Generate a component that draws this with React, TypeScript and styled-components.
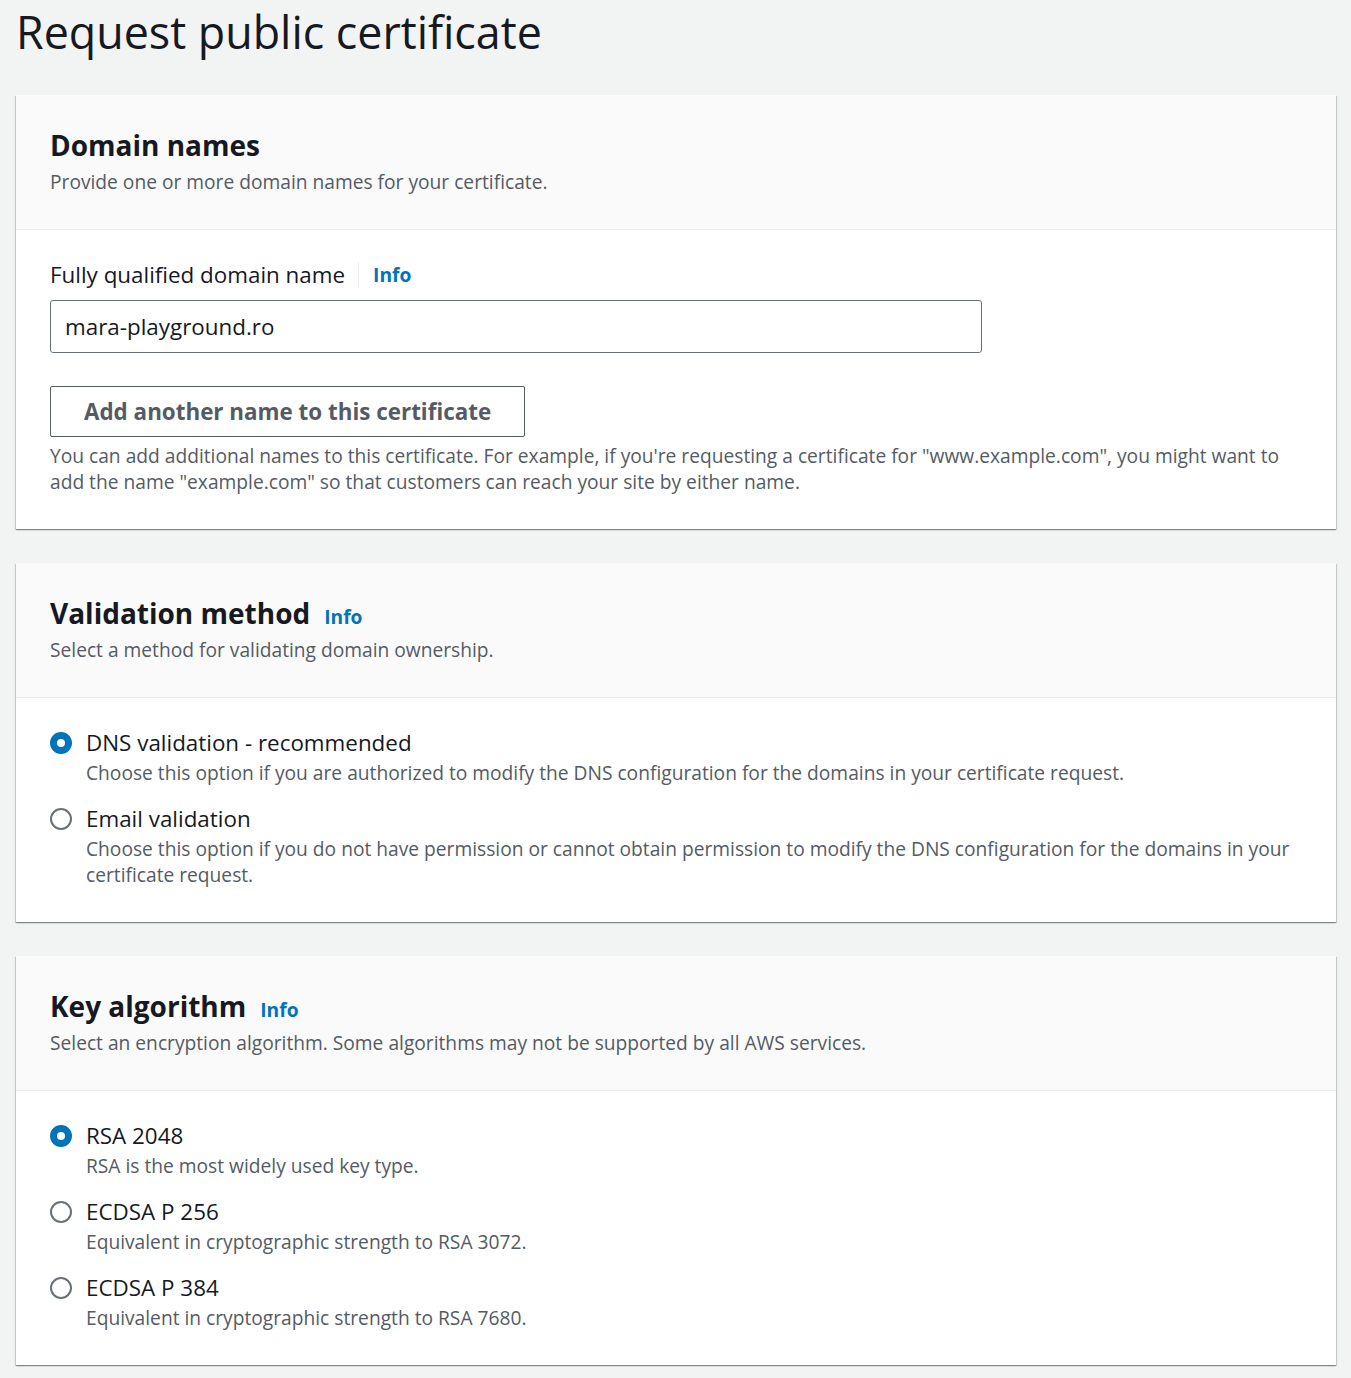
import React, { useState } from 'react';
import styled, { createGlobalStyle } from 'styled-components';

const GlobalStyle = createGlobalStyle`
  html, body {
    margin: 0;
    padding: 0;
    background: #f2f3f3;
  }
  body {
    font-family: 'Open Sans', 'Noto Sans', sans-serif;
    color: #16191f;
  }
  * {
    box-sizing: border-box;
  }
`;

const Page = styled.div`
  padding: 0 15px 12px 16px;
`;

const PageTitle = styled.h1`
  margin: 0;
  font-size: 44.8px;
  line-height: 64px;
  font-weight: 400;
  color: #16191f;
  padding-bottom: 31px;
`;

const Stack = styled.div`
  display: flex;
  flex-direction: column;
  gap: 34px;
`;

const Card = styled.section`
  background: #ffffff;
  box-shadow: 0 1px 1px 0 rgba(0, 28, 36, 0.3), 1px 1px 1px 0 rgba(0, 28, 36, 0.15),
    -1px 1px 1px 0 rgba(0, 28, 36, 0.15);
`;

const CardHeader = styled.header`
  background: #fafafa;
  border-bottom: 1px solid #eaeded;
  padding: 32px 34px 34px;
`;

const CardTitle = styled.h2`
  margin: 0;
  height: 36px;
  font-size: 28px;
  line-height: 36px;
  font-weight: 700;
  display: flex;
  align-items: baseline;
  gap: 14px;
`;

const Description = styled.p`
  margin: 6px 0 0;
  font-size: 19.2px;
  line-height: 26px;
  color: #545b64;
`;

const CardBody = styled.div`
  padding: 32px 34px 34px;
`;

const InfoLink = styled.a`
  font-size: 19.2px;
  line-height: 26px;
  font-weight: 700;
  color: #0073bb;
  text-decoration: none;
  cursor: pointer;
`;

const FieldLabelRow = styled.div`
  display: flex;
  align-items: center;
  height: 26px;
`;

const FieldLabel = styled.label`
  font-size: 22.4px;
  line-height: 26px;
  color: #16191f;
  padding-right: 13px;
  border-right: 1px solid #eaeded;
  margin-right: 14px;
`;

const TextInput = styled.input`
  display: block;
  margin-top: 12px;
  width: 932px;
  height: 53px;
  padding: 0 14px;
  font-family: inherit;
  font-size: 22.4px;
  color: #16191f;
  border: 1px solid #687078;
  border-radius: 3px;
  background: #fff;
  outline: none;
`;

const SecondaryButton = styled.button`
  display: block;
  margin-top: 33px;
  height: 51px;
  padding: 0 33px;
  font-family: inherit;
  font-size: 22.4px;
  font-weight: 700;
  color: #545b64;
  background: #fff;
  border: 1px solid #545b64;
  border-radius: 2px;
  cursor: pointer;
`;

const RadioList = styled.div`
  display: flex;
  flex-direction: column;
  gap: 20px;
`;

const RadioOption = styled.label`
  display: grid;
  grid-template-columns: 22px 1fr;
  column-gap: 14px;
  cursor: pointer;
`;

const RadioCircle = styled.span<{ $checked: boolean }>`
  width: 22px;
  height: 22px;
  margin-top: 2px;
  border-radius: 50%;
  border: ${p => (p.$checked ? '7px solid #0073bb' : '2px solid #687078')};
  background: #fff;
`;

const OptionText = styled.div`
  display: flex;
  flex-direction: column;
  gap: 4px;
`;

const OptionLabel = styled.span`
  font-size: 22.4px;
  line-height: 26px;
  color: #16191f;
`;

const OptionDesc = styled.span`
  font-size: 19.2px;
  line-height: 26px;
  color: #545b64;
`;

type Option = { value: string; label: string; desc: string };

const validationOptions: Option[] = [
  {
    value: 'dns',
    label: 'DNS validation - recommended',
    desc: 'Choose this option if you are authorized to modify the DNS configuration for the domains in your certificate request.',
  },
  {
    value: 'email',
    label: 'Email validation',
    desc: 'Choose this option if you do not have permission or cannot obtain permission to modify the DNS configuration for the domains in your certificate request.',
  },
];

const keyOptions: Option[] = [
  { value: 'rsa', label: 'RSA 2048', desc: 'RSA is the most widely used key type.' },
  { value: 'p256', label: 'ECDSA P 256', desc: 'Equivalent in cryptographic strength to RSA 3072.' },
  { value: 'p384', label: 'ECDSA P 384', desc: 'Equivalent in cryptographic strength to RSA 7680.' },
];

const RadioGroup: React.FC<{ options: Option[]; value: string; onChange: (v: string) => void }> = ({
  options,
  value,
  onChange,
}) => (
  <RadioList>
    {options.map(o => (
      <RadioOption key={o.value} onClick={() => onChange(o.value)}>
        <RadioCircle $checked={o.value === value} />
        <OptionText>
          <OptionLabel>{o.label}</OptionLabel>
          <OptionDesc>{o.desc}</OptionDesc>
        </OptionText>
      </RadioOption>
    ))}
  </RadioList>
);

const App: React.FC = () => {
  const [domain, setDomain] = useState('mara-playground.ro');
  const [validation, setValidation] = useState('dns');
  const [keyAlg, setKeyAlg] = useState('rsa');

  return (
    <Page>
      <GlobalStyle />
      <PageTitle>Request public certificate</PageTitle>
      <Stack>
        {/* Domain names */}
        <Card>
          <CardHeader>
            <CardTitle>Domain names</CardTitle>
            <Description>Provide one or more domain names for your certificate.</Description>
          </CardHeader>
          <CardBody>
            <FieldLabelRow>
              <FieldLabel>Fully qualified domain name</FieldLabel>
              <InfoLink>Info</InfoLink>
            </FieldLabelRow>
            <TextInput value={domain} onChange={e => setDomain(e.target.value)} />
            <SecondaryButton>Add another name to this certificate</SecondaryButton>
            <Description>
              You can add additional names to this certificate. For example, if you're requesting a
              certificate for "www.example.com", you might want to add the name "example.com" so that
              customers can reach your site by either name.
            </Description>
          </CardBody>
        </Card>

        {/* Validation method */}
        <Card>
          <CardHeader>
            <CardTitle>
              Validation method <InfoLink>Info</InfoLink>
            </CardTitle>
            <Description>Select a method for validating domain ownership.</Description>
          </CardHeader>
          <CardBody>
            <RadioGroup options={validationOptions} value={validation} onChange={setValidation} />
          </CardBody>
        </Card>

        {/* Key algorithm */}
        <Card>
          <CardHeader>
            <CardTitle>
              Key algorithm <InfoLink>Info</InfoLink>
            </CardTitle>
            <Description>
              Select an encryption algorithm. Some algorithms may not be supported by all AWS services.
            </Description>
          </CardHeader>
          <CardBody>
            <RadioGroup options={keyOptions} value={keyAlg} onChange={setKeyAlg} />
          </CardBody>
        </Card>
      </Stack>
    </Page>
  );
};

export default App;
